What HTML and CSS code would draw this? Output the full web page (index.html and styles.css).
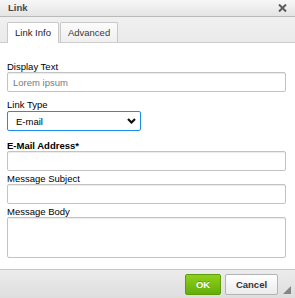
FILE: index.html
```html
<!DOCTYPE html>
<html lang="en">
<head>
    <meta charset="UTF-8">
    <title>Link</title>
    <link rel="stylesheet" href="styles.css">
</head>
<body>
<div class="dialog">
    <div class="dialog-title">
        <span class="title-text">Link</span>
        <svg class="close" width="9" height="8" viewBox="0 0 9 8">
            <path d="M1 0.5 L8 7.5 M8 0.5 L1 7.5" stroke="#5a5a5a" stroke-width="2"/>
        </svg>
    </div>

    <div class="tabs">
        <span class="tab active">Link Info</span>
        <span class="tab">Advanced</span>
    </div>

    <div class="contents">
        <div class="field first">
            <label class="label">Display Text</label>
            <input class="text-input" type="text" placeholder="Lorem ipsum">
        </div>

        <div class="field type">
            <label class="label">Link Type</label>
            <div class="select-wrap">
                <select class="select">
                    <option>E-mail</option>
                </select>
                <svg class="chevron" width="9" height="6" viewBox="0 0 9 6">
                    <path d="M1 1 L4.5 4.5 L8 1" fill="none" stroke="#111" stroke-width="2.2"/>
                </svg>
            </div>
        </div>

        <div class="field email">
            <label class="label bold">E-Mail Address*</label>
            <input class="text-input" type="text">
        </div>

        <div class="field tight">
            <label class="label">Message Subject</label>
            <input class="text-input" type="text">
        </div>

        <div class="field tight">
            <label class="label">Message Body</label>
            <textarea class="text-input area"></textarea>
        </div>
    </div>

    <div class="footer">
        <button class="btn ok">OK</button>
        <button class="btn cancel">Cancel</button>
        <svg class="grip" width="8" height="8" viewBox="0 0 8 8">
            <polygon points="8,0 8,8 0,8" fill="#858585"/>
        </svg>
    </div>
</div>
</body>
</html>
```

FILE: styles.css
```css
body {
    margin: 0;
    padding: 0;
    font-family: "Liberation Sans", Arial, sans-serif;
    font-size: 9.5px;
    color: #000;
}

.dialog {
    width: 295px;
    height: 298px;
    display: flex;
    flex-direction: column;
    background: #fff;
    overflow: hidden;
}

/* Baslik cubugu */
.dialog-title {
    height: 16px;
    display: flex;
    align-items: center;
    justify-content: space-between;
    padding: 0 8px;
    background: linear-gradient(180deg, #f7f7f7 0%, #e4e4e4 100%);
    border-bottom: 1px solid #b9b9b9;
}

.title-text {
    font-weight: bold;
    color: #474747;
    line-height: 16px;
}

.close {
    display: block;
}

/* Sekmeler */
.tabs {
    height: 25px;
    display: flex;
    align-items: flex-end;
    padding-left: 7px;
    gap: 1px;
    background: linear-gradient(180deg, #f0f0f0 0%, #eaeaea 100%);
    border-bottom: 1px solid #cdcdcd;
}

.tab {
    box-sizing: border-box;
    height: 20px;
    padding: 0 7px;
    line-height: 19px;
    color: #3a3a3a;
    background: linear-gradient(180deg, #fbfbfb 0%, #efefef 100%);
    border: 1px solid #c8c8c8;
    border-bottom: none;
    border-radius: 2px 2px 0 0;
}

.tab.active {
    height: 21px;
    margin-bottom: -1px;
    background: #fff;
    color: #222;
}

.contents {
    flex: 1;
    padding: 19px 9px 0 7px;
}

.field {
    display: flex;
    flex-direction: column;
}

.field.type {
    margin-top: 8px;
}

.field.email {
    margin-top: 10px;
}

.field.tight {
    margin-top: 3px;
}

.label {
    display: block;
    height: 10px;
    line-height: 10px;
    color: #000;
}

.label.bold {
    font-weight: bold;
}

.text-input {
    box-sizing: border-box;
    width: 100%;
    height: 20px;
    margin: 0;
    padding: 0 5px;
    font-family: inherit;
    font-size: 9.5px;
    border: 1px solid #c3c3c3;
    border-radius: 2px;
    box-shadow: inset 0 1px 1px rgba(0, 0, 0, 0.08);
    outline: none;
}

.text-input::placeholder {
    color: #7a7a7a;
}

.text-input.area {
    height: 41px;
    resize: none;
}

.select-wrap {
    position: relative;
    width: 134px;
    margin-top: 1px;
}

.select {
    box-sizing: border-box;
    width: 134px;
    height: 20px;
    margin: 0;
    padding: 0 8px;
    font-family: inherit;
    font-size: 9.5px;
    color: #000;
    background: #fff;
    border: 1px solid #1b8ff0;
    border-radius: 2px;
    appearance: none;
    -webkit-appearance: none;
    outline: none;
}

.chevron {
    position: absolute;
    right: 5px;
    top: 7px;
    pointer-events: none;
}

/* Alt cubuk */
.footer {
    position: relative;
    height: 29px;
    display: flex;
    justify-content: flex-end;
    align-items: flex-start;
    gap: 4px;
    padding: 4px 17px 0 0;
    box-sizing: border-box;
    background: linear-gradient(180deg, #ececec 0%, #dedede 100%);
    border-top: 1px solid #c6c6c6;
}

.btn {
    box-sizing: border-box;
    height: 21px;
    margin: 0;
    font-family: inherit;
    font-size: 9.5px;
    font-weight: bold;
    border-radius: 2px;
    cursor: pointer;
}

.btn.ok {
    width: 36px;
    color: #fff;
    text-shadow: 0 -1px 0 rgba(0, 0, 0, 0.25);
    background: linear-gradient(180deg, #8fd11b 0%, #64ae0b 100%);
    border: 1px solid #5f9c0c;
}

.btn.cancel {
    width: 53px;
    color: #333;
    background: linear-gradient(180deg, #ffffff 0%, #ebebeb 100%);
    border: 1px solid #b4b4b4;
}

.grip {
    position: absolute;
    right: 4px;
    bottom: 4px;
}
```
